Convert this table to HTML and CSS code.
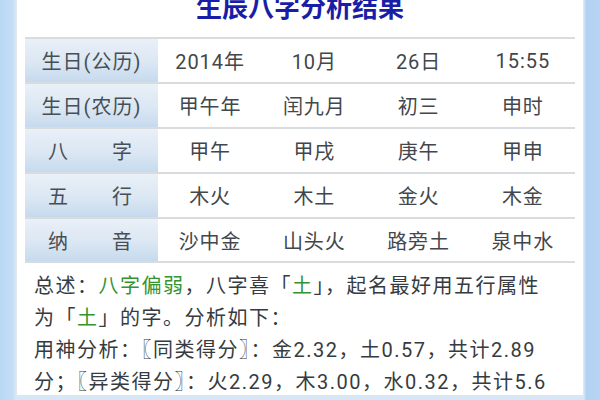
FILE: index.html
```html
<!DOCTYPE html>
<html lang="zh-CN">
<head>
<meta charset="utf-8">
<link rel="stylesheet" href="styles.css">
</head>
<body>
<div class="panel">
  <h1 class="title">生辰八字分析结果</h1>
  <div class="table">
    <div class="row">
      <div class="label">生日(公历)</div>
      <div class="cell">2014年</div>
      <div class="cell">10月</div>
      <div class="cell">26日</div>
      <div class="cell">15:55</div>
    </div>
    <div class="row">
      <div class="label">生日(农历)</div>
      <div class="cell">甲午年</div>
      <div class="cell">闰九月</div>
      <div class="cell">初三</div>
      <div class="cell">申时</div>
    </div>
    <div class="row">
      <div class="label split"><span>八</span><span>字</span></div>
      <div class="cell">甲午</div>
      <div class="cell">甲戌</div>
      <div class="cell">庚午</div>
      <div class="cell">甲申</div>
    </div>
    <div class="row">
      <div class="label split"><span>五</span><span>行</span></div>
      <div class="cell">木火</div>
      <div class="cell">木土</div>
      <div class="cell">金火</div>
      <div class="cell">木金</div>
    </div>
    <div class="row last">
      <div class="label split"><span>纳</span><span>音</span></div>
      <div class="cell">沙中金</div>
      <div class="cell">山头火</div>
      <div class="cell">路旁土</div>
      <div class="cell">泉中水</div>
    </div>
  </div>
  <p class="summary">总述：<span class="green">八字偏弱</span>，八字喜「<span class="green">土</span>」，起名最好用五行属性<br>为「<span class="green">土</span>」的字。分析如下：<br>用神分析：〖同类得分〗：金2.32，土0.57，共计2.89<br>分；〖异类得分〗：火2.29，木3.00，水0.32，共计5.6</p>
</div>
</body>
</html>
```

FILE: styles.css
```css
html, body {
  margin: 0;
  padding: 0;
}

body {
  width: 600px;
  height: 400px;
  overflow: hidden;
  background: linear-gradient(90deg, #b9d7f5 0px, #c4ddf6 12px, #d6e7f8 16px, #d6e7f8 584px, #b3d2f2 586px, #b6d4f3 600px);
  font-family: Roboto, "Noto Sans CJK SC", sans-serif;
  color: #444;
}

.panel {
  margin: 0 16px;
  height: 400px;
  background: #fff;
  border-left: 1px solid #e2e8ee;
  border-right: 1px solid #e2e8ee;
  padding: 0 8px;
}

.title {
  margin: -5px 0 0;
  height: 42px;
  font-size: 26px;
  line-height: 26px;
  font-weight: bold;
  color: #1a1ea6;
  text-align: center;
  letter-spacing: 0;
}

.table {
  display: flex;
  flex-direction: column;
}

.row {
  display: grid;
  grid-template-columns: 133px repeat(4, 1fr);
  height: 45px;
  border-top: 2px solid #d9dcdf;
  box-sizing: border-box;
}

.row.last {
  height: 46px;
  border-bottom: 2px solid #d9dcdf;
}

.label {
  display: flex;
  align-items: center;
  justify-content: center;
  background: linear-gradient(180deg, #e9f0f8 0%, #dbe7f3 55%, #c6daee 100%);
  font-size: 20px;
  letter-spacing: 1px;
  color: #474f56;
}

.label.split {
  justify-content: space-between;
  padding: 0 25px 0 23px;
}

.cell {
  display: flex;
  align-items: center;
  justify-content: center;
  font-size: 20px;
  letter-spacing: 1px;
  color: #41474c;
}

.summary {
  margin: 0;
  padding: 7px 0 0 9px;
  font-size: 20px;
  line-height: 32px;
  letter-spacing: 1.5px;
  color: #363b40;
}

.green {
  color: #34942f;
}
```
